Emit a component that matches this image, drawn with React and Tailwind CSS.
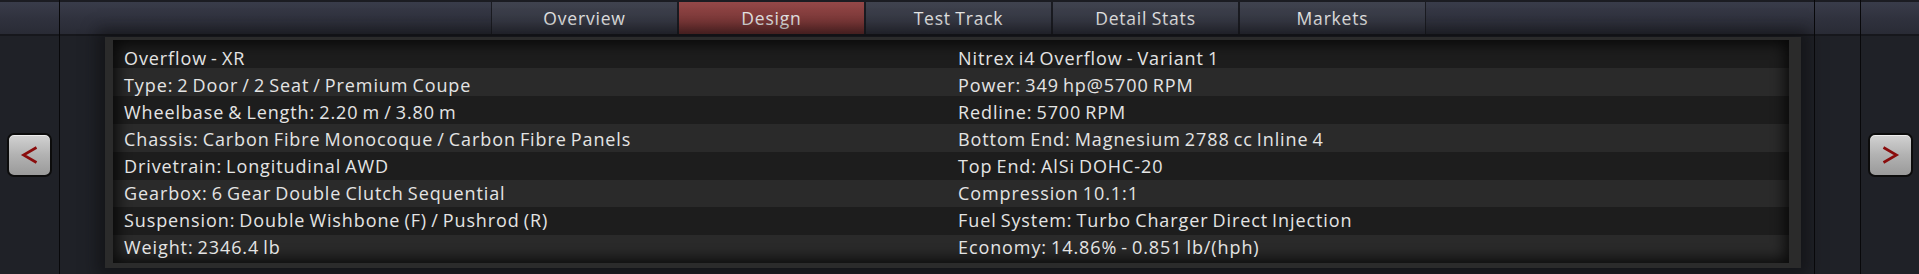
import React from "react";

const leftSpecs = [
  "Overflow - XR",
  "Type: 2 Door / 2 Seat / Premium Coupe",
  "Wheelbase & Length: 2.20 m / 3.80 m",
  "Chassis: Carbon Fibre Monocoque / Carbon Fibre Panels",
  "Drivetrain: Longitudinal AWD",
  "Gearbox: 6 Gear Double Clutch Sequential",
  "Suspension: Double Wishbone (F) / Pushrod (R)",
  "Weight: 2346.4 lb",
];

const rightSpecs = [
  "Nitrex i4 Overflow - Variant 1",
  "Power: 349 hp@5700 RPM",
  "Redline: 5700 RPM",
  "Bottom End: Magnesium 2788 cc Inline 4",
  "Top End: AlSi DOHC-20",
  "Compression 10.1:1",
  "Fuel System: Turbo Charger Direct Injection",
  "Economy: 14.86% - 0.851 lb/(hph)",
];

const tabs = ["Overview", "Design", "Test Track", "Detail Stats", "Markets"];

const BarSegment = ({ children, className = "" }) => (
  <div
    className={`h-[36px] shrink-0 border-t-2 border-b-2 border-t-[#1b1c22] border-b-[#16171c] bg-gradient-to-b from-[#393c4a] via-[#30323e] to-[#292b35] ${className}`}
  >
    {children}
  </div>
);

const ArrowButton = ({ dir }) => (
  <button className="w-[45px] h-[44px] rounded-[7px] border-2 border-[#0c0c0c] bg-gradient-to-b from-[#d2d2d2] via-[#b2b2b2] to-[#9a9a9a] shadow-[inset_0_1px_0_rgba(255,255,255,0.6)] flex items-center justify-center">
    <svg width="20" height="20" viewBox="0 0 20 20">
      {dir === "left" ? (
        <polyline
          points="16.5,2.5 3.5,10 16.5,17.5"
          fill="none"
          stroke="#8a0c0c"
          strokeWidth="2.6"
        />
      ) : (
        <polyline
          points="3.5,2.5 16.5,10 3.5,17.5"
          fill="none"
          stroke="#8a0c0c"
          strokeWidth="2.6"
        />
      )}
    </svg>
  </button>
);

const SideColumn = ({ width, children }) => (
  <div className={`${width} shrink-0 flex flex-col`}>
    <BarSegment />
    <div className="flex-1 flex items-center justify-center">{children}</div>
  </div>
);

const Divider = () => <div className="w-px shrink-0 bg-[#08080a]" />;

const App = () => {
  return (
    <div className="w-[1919px] h-[274px] flex bg-[#1f2127] overflow-hidden font-['Open_Sans','Lato',sans-serif] text-[#e4e4e4]">
      <SideColumn width="w-[59px]">
        <ArrowButton dir="left" />
      </SideColumn>
      <Divider />

      <div className="w-[1754px] shrink-0 flex flex-col">
        <BarSegment className="flex">
          <div className="ml-[431px] flex h-full">
            {tabs.map((tab) => {
              const active = tab === "Design";
              return (
                <div
                  key={tab}
                  className={`w-[187px] h-full flex items-center justify-center border-x border-[#1a1b21] text-[17.5px] tracking-[0.8px] [word-spacing:-1px] ${
                    active
                      ? "bg-gradient-to-b from-[#944848] to-[#6c2d2d]"
                      : "bg-gradient-to-b from-[#40434f] to-[#2e303b]"
                  }`}
                >
                  {tab}
                </div>
              );
            })}
          </div>
        </BarSegment>

        <div className="flex-1 pl-[45px] pr-[13px] pt-[1px] pb-[6px]">
          <div className="h-full bg-[#2a2a2a] border-l-[8px] border-r-[12px] border-t-[3px] border-b-[5px] border-[#2b2b2b] shadow-[0_0_14px_8px_rgba(12,12,14,0.55)]">
            <div className="h-full bg-[repeating-linear-gradient(to_bottom,#1d1d1d_0px,#1d1d1d_27.9px,#2a2a2a_27.9px,#2a2a2a_55.8px)] shadow-[inset_0_0_14px_4px_rgba(0,0,0,0.75)] pt-[4px]">
              {leftSpecs.map((left, i) => (
                <div
                  key={left}
                  className="h-[27px] grid grid-cols-2 items-center text-[18px] tracking-[0.9px] [word-spacing:-1.5px] leading-none"
                >
                  <div className="pl-[11px] whitespace-nowrap">{left}</div>
                  <div className="pl-[7px] whitespace-nowrap">
                    {rightSpecs[i]}
                  </div>
                </div>
              ))}
            </div>
          </div>
        </div>
      </div>

      <Divider />
      <div className="w-[45px] shrink-0 flex flex-col">
        <BarSegment />
      </div>
      <Divider />
      <SideColumn width="w-[58px]">
        <ArrowButton dir="right" />
      </SideColumn>
    </div>
  );
};

export default App;
